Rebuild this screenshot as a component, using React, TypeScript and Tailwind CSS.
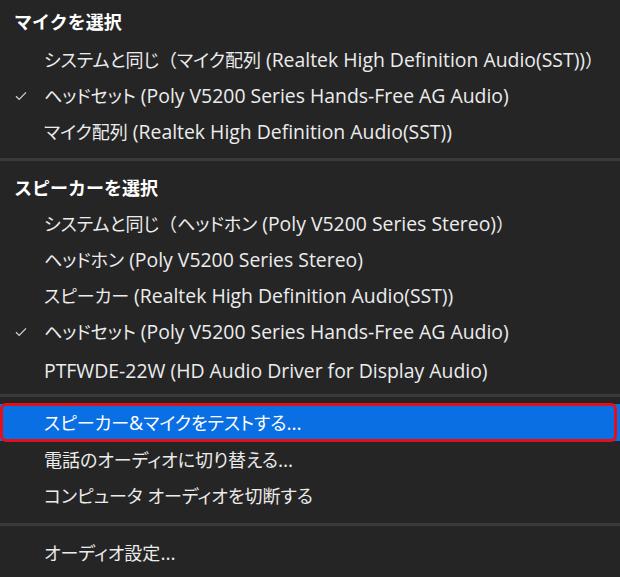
const font = {
  fontFamily: '"Open Sans", "Noto Sans CJK JP", sans-serif',
};

const jp = /[\u3000-\u30ff\u4e00-\u9fff\uff00-\uffef]/;

// Japanese runs use proportional kana (palt), Latin runs a touch larger, like Segoe UI + Meiryo UI
function Label({ text, className }: { text: string; className?: string }) {
  const parts = text
    .split(/([（）]|[\u3000-\u30ff\u4e00-\u9fff\uff00-\uff07\uff0a-\uffef]+)/)
    .filter(Boolean);
  return (
    <span className={"whitespace-nowrap " + (className ?? "")}>
      {parts.map((p, i) => {
        if (p === "（" || p === "）") return <span key={i} className="text-[18px]">{p}</span>;
        if (jp.test(p)) return <span key={i} className="text-[18px] [font-feature-settings:'palt']">{p}</span>;
        return <span key={i} className="text-[19.4px]">{p}</span>;
      })}
    </span>
  );
}

function Check() {
  return (
    <svg width="12" height="10" viewBox="0 0 12 10" className="text-[#cfcfcf]">
      <path d="M1 5.2 L4.2 8.4 L11 1.4" fill="none" stroke="currentColor" strokeWidth="1.3" />
    </svg>
  );
}

function Item({ label, checked }: { label: string; checked?: boolean }) {
  return (
    <div className="flex h-[36px] items-center">
      <div className="flex w-[44px] justify-center pl-[6px] pr-[8px]">{checked && <Check />}</div>
      <Label text={label} className="text-[#ececec]" />
    </div>
  );
}

function Header({ label }: { label: string }) {
  return (
    <div className="flex h-[36px] items-center pl-[14px]">
      <span className="text-[18px] font-bold text-white">{label}</span>
    </div>
  );
}

function Sep() {
  return <div className="h-[3px] bg-[#3a3a3b]" />;
}

export default function App() {
  return (
    <div className="h-[577px] w-[620px] overflow-hidden bg-[#252526]" style={font}>
      {/* マイク */}
      <div className="pt-[4px] pb-[8px]">
        <Header label="マイクを選択" />
        <div className="mt-[2px]">
          <Item label="システムと同じ（マイク配列 (Realtek High Definition Audio(SST))）" />
          <Item label="ヘッドセット (Poly V5200 Series Hands-Free AG Audio)" checked />
          <Item label="マイク配列 (Realtek High Definition Audio(SST))" />
        </div>
      </div>
      <Sep />

      {/* スピーカー */}
      <div className="pt-[9px] pb-[5px]">
        <Header label="スピーカーを選択" />
        <Item label="システムと同じ（ヘッドホン (Poly V5200 Series Stereo)）" />
        <Item label="ヘッドホン (Poly V5200 Series Stereo)" />
        <Item label="スピーカー (Realtek High Definition Audio(SST))" />
        <Item label="ヘッドセット (Poly V5200 Series Hands-Free AG Audio)" checked />
        <div className="mt-[3px]">
          <Item label="PTFWDE-22W (HD Audio Driver for Display Audio)" />
        </div>
      </div>
      <Sep />

      {/* actions */}
      <div className="pt-[7px] pb-[9px]">
        <div className="relative flex h-[37px] items-center bg-[#0b6fe4]">
          <div className="absolute top-[-1px] bottom-[-1px] left-0 right-[3px] rounded-[6px] border-[3px] border-[#e3101a]" />
          <Label text="スピーカー&マイクをテストする..." className="relative pl-[44px] text-white" />
        </div>
        <div className="mt-[1px]">
          <Item label="電話のオーディオに切り替える..." />
          <Item label="コンピュータ オーディオを切断する" />
        </div>
      </div>
      <Sep />
      <div className="pt-[9px]">
        <Item label="オーディオ設定..." />
      </div>
    </div>
  );
}
